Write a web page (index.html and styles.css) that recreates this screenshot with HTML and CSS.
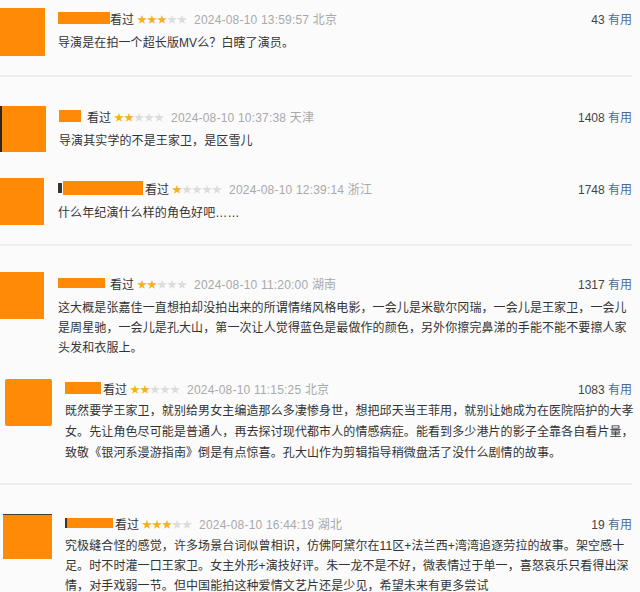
FILE: index.html
```html
<!DOCTYPE html>
<html>

<head>
    <meta charset="utf-8">
    <title>短评</title>
    <link rel="stylesheet" href="styles.css">
</head>

<body>
    <div class="feed">
        <div class="comment c1">
            <div class="avatar"></div>
            <div class="body">
                <div class="head">
                    <span class="name"></span>
                    <span class="watched">看过</span>
                    <span class="stars"><span class="on">★★★</span>★★</span>
                    <span class="time">2024-08-10 13:59:57 北京</span>
                    <span class="votes"><span class="count">43</span> 有用</span>
                </div>
                <p class="text">导演是在拍一个超长版MV么？白瞎了演员。</p>
            </div>
        </div>

        <div class="divider"></div>

        <div class="comment c2">
            <div class="avatar"></div>
            <div class="body">
                <div class="head">
                    <span class="name"></span>
                    <span class="watched">看过</span>
                    <span class="stars"><span class="on">★★</span>★★★</span>
                    <span class="time">2024-08-10 10:37:38 天津</span>
                    <span class="votes"><span class="count">1408</span> 有用</span>
                </div>
                <p class="text">导演其实学的不是王家卫，是区雪儿</p>
            </div>
        </div>

        <div class="comment c3">
            <div class="avatar"></div>
            <div class="body">
                <div class="head">
                    <span class="mark"></span>
                    <span class="name"></span>
                    <span class="watched">看过</span>
                    <span class="stars"><span class="on">★</span>★★★★</span>
                    <span class="time">2024-08-10 12:39:14 浙江</span>
                    <span class="votes"><span class="count">1748</span> 有用</span>
                </div>
                <p class="text">什么年纪演什么样的角色好吧……</p>
            </div>
        </div>

        <div class="divider"></div>

        <div class="comment c4">
            <div class="avatar"></div>
            <div class="body">
                <div class="head">
                    <span class="name"></span>
                    <span class="watched">看过</span>
                    <span class="stars"><span class="on">★★</span>★★★</span>
                    <span class="time">2024-08-10 11:20:00 湖南</span>
                    <span class="votes"><span class="count">1317</span> 有用</span>
                </div>
                <p class="text">这大概是张嘉佳一直想拍却没拍出来的所谓情绪风格电影，一会儿是米歇尔冈瑞，一会儿是王家卫，一会儿是周星驰，一会儿是孔大山，第一次让人觉得蓝色是最做作的颜色，另外你擦完鼻涕的手能不能不要擦人家头发和衣服上。</p>
            </div>
        </div>

        <div class="comment c5">
            <div class="avatar"></div>
            <div class="body">
                <div class="head">
                    <span class="name"></span>
                    <span class="watched">看过</span>
                    <span class="stars"><span class="on">★★</span>★★★</span>
                    <span class="time">2024-08-10 11:15:25 北京</span>
                    <span class="votes"><span class="count">1083</span> 有用</span>
                </div>
                <p class="text">既然要学王家卫，就别给男女主编造那么多凄惨身世，想把邱天当王菲用，就别让她成为在医院陪护的大孝女。先让角色尽可能是普通人，再去探讨现代都市人的情感病症。能看到多少港片的影子全靠各自看片量，致敬《银河系漫游指南》倒是有点惊喜。孔大山作为剪辑指导稍微盘活了没什么剧情的故事。</p>
            </div>
        </div>

        <div class="divider"></div>

        <div class="comment c6">
            <div class="avatar"></div>
            <div class="body">
                <div class="head">
                    <span class="mark"></span>
                    <span class="name"></span>
                    <span class="watched">看过</span>
                    <span class="stars"><span class="on">★★★</span>★★</span>
                    <span class="time">2024-08-10 16:44:19 湖北</span>
                    <span class="votes"><span class="count">19</span> 有用</span>
                </div>
                <p class="text">究极缝合怪的感觉，许多场景台词似曾相识，仿佛阿黛尔在11区+法兰西+湾湾追逐劳拉的故事。架空感十足。时不时灌一口王家卫。女主外形+演技好评。朱一龙不是不好，微表情过于单一，喜怒哀乐只看得出深情，对手戏弱一节。但中国能拍这种爱情文艺片还是少见，希望未来有更多尝试</p>
            </div>
        </div>
    </div>
</body>

</html>
```

FILE: styles.css
```css
body {
    margin: 0;
    background: #fbfbfc;
    font-family: "Liberation Sans", "Noto Sans CJK SC", sans-serif;
    color: #333333;
    overflow: hidden;
}

.feed {
    padding-right: 8px;
}

.comment {
    display: flex;
    gap: 13px;
}

.avatar {
    width: 45px;
    height: 48px;
    flex-shrink: 0;
    background: #ff8a05;
}

.body {
    flex: 1;
    min-width: 0;
}

.head {
    display: flex;
    align-items: center;
    height: 20px;
    font-size: 12px;
    white-space: nowrap;
}

.name {
    height: 12px;
    background: #ff8a05;
}

.mark {
    width: 4px;
    height: 10px;
    background: #3a3430;
}

.watched {
    color: #333333;
    margin-right: 3px;
}

.stars {
    font-family: "Noto Sans CJK SC", sans-serif;
    font-size: 10px;
    color: #dcdcdc;
    margin-right: 7px;
}

.stars .on {
    color: #f6b01e;
}

.time {
    color: #a9a9a9;
    letter-spacing: 0.2px;
}

.votes {
    margin-left: auto;
    color: #4d6a93;
}

.count {
    color: #444444;
}

.text {
    margin: 5px 0 0 0;
    font-size: 12px;
    line-height: 20px;
    letter-spacing: 0.1px;
}

.divider {
    height: 2px;
    margin-top: 19px;
    background: #eceef1;
}

.c1 {
    margin-top: 8px;
}

.c1 .name {
    width: 52px;
}

.c2 {
    margin-top: 29px;
}

.c2 .avatar {
    height: 46px;
    width: 44px;
    border-left: 2px solid #2a2522;
}

.c2 .name {
    width: 22px;
    margin-right: 6px;
}

.c3 {
    margin-top: 26px;
}

.c3 .avatar {
    width: 44px;
    height: 47px;
    margin-right: 1px;
}

.c3 .name {
    width: 80px;
    height: 14px;
    margin-left: 1px;
    margin-right: 2px;
}

.c4 {
    margin-top: 27px;
}

.c4 .avatar {
    width: 44px;
    height: 47px;
    margin-top: -1px;
    margin-right: 1px;
}

.c4 .name {
    width: 47px;
    height: 10px;
    margin-right: 5px;
}

.c5 {
    margin-top: 20px;
    padding-left: 5px;
}

.c5 .avatar {
    width: 47px;
    height: 47px;
    margin-top: 1px;
    border-radius: 2px;
}

.c5 .name {
    width: 36px;
    height: 12px;
    margin-right: 2px;
}

.c5 .text {
    margin-top: 3px;
    margin-right: -5px;
    line-height: 21px;
}

.c6 {
    margin-top: 28px;
    padding-left: 3px;
}

.c6 .avatar {
    width: 49px;
    height: 44px;
    margin-top: 1px;
    border-top: 1px solid #4a3a2c;
}

.c6 .name {
    width: 46px;
    height: 10px;
    margin-right: 2px;
}

.c6 .mark {
    width: 2px;
}

.c6 .text {
    margin-top: 3px;
    line-height: 20px;
}
```
